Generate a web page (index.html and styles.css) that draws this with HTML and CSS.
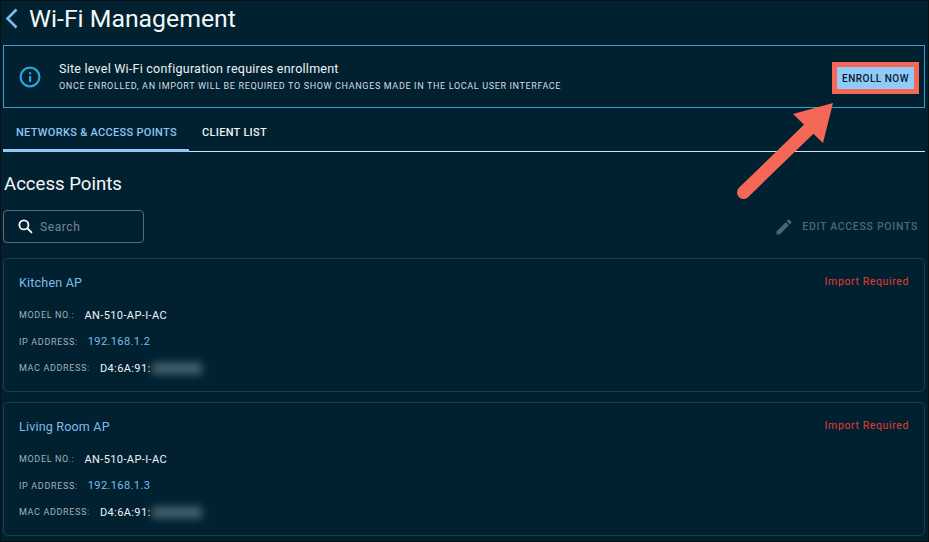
FILE: index.html
```html
<!DOCTYPE html>
<html lang="en">
<head>
<meta charset="utf-8">
<title>Wi-Fi Management</title>
<link rel="stylesheet" href="styles.css">
</head>
<body>
<div class="frame">
  <header class="title-bar">
    <svg class="back" width="14" height="22" viewBox="0 0 14 22"><path d="M11.5 1.5 2.5 10.5l9 9" fill="none" stroke="#7fbcec" stroke-width="2.6"/></svg>
    <h1>Wi-Fi Management</h1>
  </header>
  <section class="banner">
    <svg class="info" width="22" height="22" viewBox="0 0 22 22"><circle cx="11" cy="11" r="9.4" fill="none" stroke="#29a3dc" stroke-width="2.2"/><rect x="10" y="10" width="2.2" height="6" fill="#29a3dc"/><rect x="10" y="6.2" width="2.2" height="2.2" fill="#29a3dc"/></svg>
    <div class="banner-text">
      <div class="banner-title">Site level Wi-Fi configuration requires enrollment</div>
      <div class="banner-sub">ONCE ENROLLED, AN IMPORT WILL BE REQUIRED TO SHOW CHANGES MADE IN THE LOCAL USER INTERFACE</div>
    </div>
    <button class="enroll">ENROLL NOW</button>
  </section>
  <nav class="tabs">
    <span class="tab active">NETWORKS &amp; ACCESS POINTS</span>
    <span class="tab">CLIENT LIST</span>
  </nav>
  <h2>Access Points</h2>
  <div class="tools">
    <label class="search">
      <svg width="17" height="17" viewBox="0 0 18 18"><circle cx="7.3" cy="7.3" r="4.8" fill="none" stroke="#fff" stroke-width="1.9"/><path d="m10.8 10.8 5 5" stroke="#fff" stroke-width="2"/></svg>
      <span>Search</span>
    </label>
    <div class="edit">
      <svg width="20" height="20" viewBox="0 0 24 24"><path fill="#4f6670" d="M3 17.25V21h3.75L17.81 9.94l-3.75-3.75L3 17.25zM20.71 7.04a1 1 0 0 0 0-1.41l-2.34-2.34a1 1 0 0 0-1.41 0l-1.83 1.83 3.75 3.75 1.83-1.83z"/></svg>
      <span>EDIT ACCESS POINTS</span>
    </div>
  </div>
  <article class="card">
    <div class="card-head"><span class="name">Kitchen AP</span><span class="status">Import Required</span></div>
    <div class="row first"><span class="label">MODEL NO.:</span><span class="value">AN-510-AP-I-AC</span></div>
    <div class="row"><span class="label">IP ADDRESS:</span><span class="value link">192.168.1.2</span></div>
    <div class="row"><span class="label">MAC ADDRESS:</span><span class="value mac">D4:6A:91:</span><span class="blur"></span></div>
  </article>
  <article class="card">
    <div class="card-head"><span class="name">Living Room AP</span><span class="status">Import Required</span></div>
    <div class="row first"><span class="label">MODEL NO.:</span><span class="value">AN-510-AP-I-AC</span></div>
    <div class="row"><span class="label">IP ADDRESS:</span><span class="value link">192.168.1.3</span></div>
    <div class="row"><span class="label">MAC ADDRESS:</span><span class="value mac">D4:6A:91:</span><span class="blur"></span></div>
  </article>
  <div class="callout"></div>
  <svg class="arrow" width="120" height="120" viewBox="0 0 120 120"><path d="M13.5 92.5 81 27" stroke="#f56757" stroke-width="13" stroke-linecap="round" fill="none"/><path d="M103 3 63 14 93 43z" fill="#f56757"/></svg>
</div>
</body>
</html>
```
FILE: styles.css
```css
* { box-sizing: border-box; }
html, body { margin: 0; height: 100%; }
body { background: #012130; overflow: hidden; font-family: Roboto, "Liberation Sans", sans-serif; color: #fff; }
.frame { position: relative; width: 929px; height: 542px; padding: 0 4px 0 2px; border: 1px solid #0b0f12; overflow: hidden; }
.title-bar { display: flex; align-items: center; height: 35px; padding-left: 2px; gap: 10px; }
.back { flex: none; margin-top: 1px; }
h1 { margin: 0; font-size: 24.8px; font-weight: 400; line-height: 35px; color: #f2f6f8; }
.banner { display: flex; align-items: center; height: 63px; margin-top: 9px; width: 922px; border: 1px solid #3a9fd0; padding: 0 10px 0 15px; }
.info { flex: none; }
.banner-text { flex: 1; margin-left: 18px; padding-top: 1px; }
.banner-title { font-size: 12.5px; line-height: 17px; letter-spacing: 0.24px; color: #eef3f5; }
.banner-sub { font-size: 9px; line-height: 15px; margin-top: 2px; letter-spacing: 0.65px; color: #d4dde1; }
.enroll { width: 77px; height: 22px; margin-top: 3px; border: 0; padding: 0; background: #90caf9; color: #0a2030; font-family: inherit; font-size: 10px; font-weight: 500; letter-spacing: 0.5px; }
.tabs { display: flex; height: 44px; width: 922px; border-bottom: 1px solid #cfe3ee; align-items: flex-end; }
.tab { display: block; height: 37px; padding: 0 13px; line-height: 35px; font-size: 11px; font-weight: 500; letter-spacing: 0.3px; color: #eef3f5; margin-bottom: -1px; white-space: nowrap; }
.active { width: 186px; color: #8ec4f2; border-bottom: 3px solid #90caf9; }
h2 { margin: 20px 0 0 1px; font-size: 18.6px; font-weight: 400; line-height: 24px; color: #f4f7f8; }
.tools { display: flex; justify-content: space-between; align-items: center; width: 922px; margin-top: 14px; }
.search { display: flex; align-items: center; gap: 6px; width: 141px; height: 33px; padding-left: 13px; border: 1px solid #566d78; border-radius: 4px; font-size: 12px; color: #74888f; letter-spacing: 0.6px; }
.edit { display: flex; align-items: center; gap: 8px; padding-right: 7px; font-size: 10.5px; font-weight: 500; letter-spacing: 0.7px; color: #4f6670; }
.card { width: 922px; height: 134px; margin-top: 15px; margin-bottom: -5px; padding: 14px 15px 0; border: 1px solid #1e3e4c; border-radius: 5px; }
.card-head { display: flex; justify-content: space-between; height: 18px; align-items: center; }
.name { font-size: 12.5px; letter-spacing: 0.2px; color: #7fbcec; }
.status { font-size: 10.5px; letter-spacing: 0.62px; color: #e03a33; margin-top: -1px; }
.row { display: flex; align-items: center; height: 26.5px; }
.first { margin-top: 11px; }
.label { font-size: 9px; letter-spacing: 0.65px; color: #a3b1b7; }
.value { margin-left: 10px; font-size: 11px; letter-spacing: 0.4px; color: #f0f4f6; }
.link { color: #7fbcec; }
.blur { display: inline-block; width: 50px; height: 11px; margin-left: 1px; background: #5d7680; filter: blur(4px); opacity: .8; }
.callout { position: absolute; left: 831px; top: 61px; width: 87px; height: 32px; border: 5px solid #f56757; }
.arrow { position: absolute; left: 729px; top: 99px; }
```
